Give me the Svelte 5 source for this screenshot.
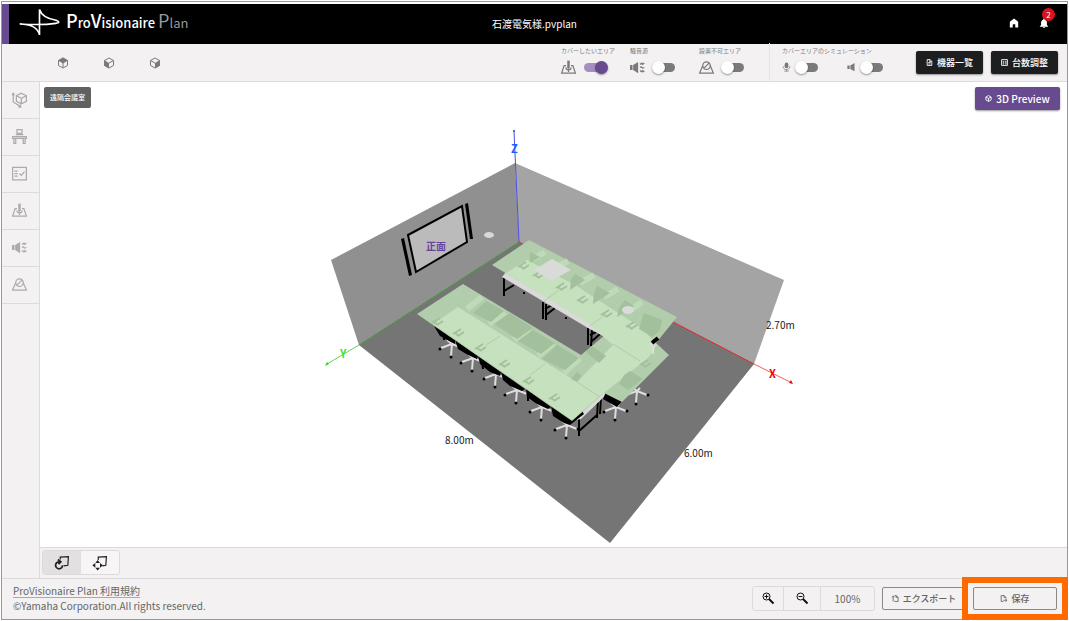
<script lang="ts">
	type Toggle = { id: string; icon: string; label: string; on: boolean };

	let areaToggles = $state<Toggle[]>([
		{ id: 'cover', icon: 'cover', label: 'カバーしたいエリア', on: true },
		{ id: 'noise', icon: 'noise', label: '騒音源', on: false },
		{ id: 'blocked', icon: 'blocked', label: '設置不可エリア', on: false }
	]);

	let simToggles = $state([
		{ id: 'mic', icon: 'mic', on: false },
		{ id: 'speaker', icon: 'speaker', on: false }
	]);

	const views = ['cubeTop', 'cubeLeft', 'cubeRight'];
	const tools = ['dimensions', 'desk', 'checklist', 'cover', 'noise', 'blocked'];

	let dragMode = $state('rotate');

	const nearChairs = [
		[452, 344],
		[473, 358],
		[496, 374],
		[517, 390],
		[542, 407],
		[567, 425],
		[616, 407],
		[637, 391]
	];

	const seats = [
		'434,326 455,340 455,344 449,341 440,336',
		'455,340 478,356 477,359 468,355 458,349',
		'478,356 501,372 500,376 490,372 480,364',
		'501,372 525,389 522,391 510,386 503,380',
		'526,389 551,407 548,409 537,404 527,397',
		'551,406 571,420 582,411 584,414 570,425 564,423 553,416',
		'606,392 623,400 617,407 603,399'
	];

	const shades = [
		'473,313 486,301 504,311 491,322',
		'494,324 510,313 533,328 517,339',
		'518,341 533,330 555,343 541,354',
		'542,359 557,345 579,358 565,370',
		'571,379 577,372 582,376 577,382',
		'586,352 592,346 606,356 599,363',
		'530,252 540,257 530,263',
		'575,274 585,280 570,290 571,279',
		'597,286 610,293 593,304 594,293',
		'625,300 634,306 617,317 619,308',
		'644,313 662,320 660,330 652,337 639,329',
		'624,375 630,371 643,379 628,390 619,384'
	];

	const arms = [
		[437, 322],
		[458, 333],
		[480, 348],
		[504, 364],
		[528, 381],
		[554, 398],
		[523, 266],
		[538, 275],
		[561, 287],
		[582, 300],
		[606, 314],
		[631, 326],
		[645, 364],
		[626, 382]
	];
</script>

{#snippet icon(name: string)}
	<svg class="icon icon--{name}" viewBox="0 0 24 24" aria-hidden="true">
		{#if name === 'cubeTop'}
			<path class="line" d="M12 2 21 7v10l-9 5-9-5V7zM12 12v10" />
			<path class="solid" d="M12 1 22 7l-10 6L2 7z" />
		{:else if name === 'cubeLeft'}
			<path class="line" d="M12 2 21 7v10l-9 5-9-5V7zM12 12l9-5" />
			<path class="solid" d="M2 6l10 6v11L2 17z" />
		{:else if name === 'cubeRight'}
			<path class="line" d="M12 2 21 7v10l-9 5-9-5V7zM3 7l9 5" />
			<path class="solid" d="M22 6l-10 6v11l10-6z" />
		{:else if name === 'cube'}
			<path class="line" d="M12 2 21 7v10l-9 5-9-5V7zM3 7l9 5 9-5M12 12v10" />
		{:else if name === 'dimensions'}
			<path class="line" d="M15 2l8 4v9l-8 4-8-4V6zM7 6l8 4 8-4M15 10v9M2 3v13l11 7M0 5l2-3 2 3M10 24h4l-1-4" />
		{:else if name === 'desk'}
			<path class="line" d="M8 1h8v6H8zM6 9h12M1 12h22v3H1zM3 15v8h3v-8M18 15v8h3v-8" />
		{:else if name === 'checklist'}
			<path class="line" d="M1 2h22v20H1zM4 8h5M4 12h5M4 16h5M12 12l3 3 5-6" />
		{:else if name === 'cover'}
			<path class="line" d="M8 9H5L1 21h22L19 9h-3M12 13v6M8 12c0 5 8 5 8 0" />
			<path class="solid" d="M10 1h4v12h-4z" />
		{:else if name === 'noise'}
			<path class="solid" d="M0 8h4v8H0zM5 8l8-5v18l-8-5z" />
			<path class="line" d="M16 7l3-2 1 2 3-2M16 12l2-1 2 2 3-1M16 17l3 2 1-2 3 2" />
		{:else if name === 'blocked'}
			<path class="line" d="M6 9 1 21h22L18 9M18 9a6 6 0 1 1-12 0 6 6 0 0 1 12 0M8 13l8-8" />
		{:else if name === 'mic'}
			<rect class="solid" x="7" y="0" width="10" height="15" rx="5" />
			<path class="line" d="M3 10c0 12 18 12 18 0M12 18v5M6 23h12" />
		{:else if name === 'speaker'}
			<path class="solid" d="M1 8h6v9H1zM9 8l11-7v22L9 17z" />
		{:else if name === 'home'}
			<path class="solid" d="M2 9l10-8 10 8v14h-7v-8H9v8H2z" />
		{:else if name === 'bell'}
			<path class="solid" d="M12 1c-2 0-2 2-2 3-4 1-5 4-5 7v6l-3 3v1h20v-1l-3-3v-6c0-3-1-6-5-7 0-1 0-3-2-3zM9 22h6c0 3-6 3-6 0z" />
		{:else if name === 'doc'}
			<path class="line" d="M4 2h10l6 6v14H4zM8 12h8M8 17h8M13 2v7h6" />
		{:else if name === 'calc'}
			<path class="line" d="M2 2h20v20H2zM6 8h5M6 13h5M6 17h5M14 8h5M14 13h5M14 17h5" />
		{:else if name === 'export'}
			<path class="line" d="M8 22h13V8l-6-6H9M14 2v6h6M4 22V5M0 8l4-5 4 5" />
		{:else if name === 'save'}
			<path class="line" d="M12 22H4V2h10l6 6v4M14 2v6h5M12 18h11M19 13l4 5-4 5" />
		{:else if name === 'rotate'}
			<path class="line" d="M9 6 9 2l14-1-1 15-7 1" />
			<path class="arrow" d="M13 16a6 6 0 1 1-5-6M5 6l5 4-4 4" />
		{:else if name === 'pan'}
			<path class="line" d="M9 7V2l14-1-1 15-6 1" />
			<path class="solid" d="M8 7l4 5H4zM8 25l4-5H4zM-1 16l5-4v8zM17 16l-5-4v8z" />
		{:else if name === 'zoomIn' || name === 'zoomOut'}
			<circle class="line" cx="9" cy="9" r="7" />
			<path class="heavy" d="M14 14l9 9" />
			<path class="line" d={name === 'zoomIn' ? 'M5 9h8M9 5v8' : 'M5 9h8'} />
		{/if}
	</svg>
{/snippet}

<div class="app">
	<header class="header">
		<div class="brand">
			<svg class="brand__mark" viewBox="56 22 124 84" aria-hidden="true">
				<path d="M58 70C90 70 112 80 118 103V26C124 45 145 54 165 58C179 62 180 67 167 68C140 72 90 72 58 70" />
			</svg>
			<span class="brand__name"><b>P</b>ro<b>V</b>isionaire <span class="brand__sub"><b>P</b>lan</span></span>
		</div>
		<h1 class="header__file">石渡電気様.pvplan</h1>
		<div class="header__actions">
			<button type="button" class="header__btn" aria-label="Home">{@render icon('home')}</button>
			<button type="button" class="header__btn" aria-label="Notifications">
				{@render icon('bell')}
				<span class="badge">2</span>
			</button>
		</div>
	</header>

	<div class="toolbar">
		<div class="views">
			{#each views as view (view)}
				<button type="button" class="views__btn" aria-label={view}>{@render icon(view)}</button>
			{/each}
		</div>

		<div class="toggles">
			{#each areaToggles as t (t.id)}
				<div class="toggle">
					<label class="toggle__label" for={t.id}>{t.label}</label>
					<div class="toggle__row">
						{@render icon(t.icon)}
						<input class="switch" type="checkbox" id={t.id} bind:checked={t.on} />
					</div>
				</div>
			{/each}
		</div>

		<div class="sim" role="group" aria-labelledby="sim-title">
			<span class="toggle__label" id="sim-title">カバーエリアのシミュレーション</span>
			<div class="sim__row">
				{#each simToggles as t (t.id)}
					<label class="sim__item" aria-label={t.id}>
						{@render icon(t.icon)}
						<input class="switch" type="checkbox" bind:checked={t.on} />
					</label>
				{/each}
			</div>
		</div>

		<div class="toolbar__actions">
			<button type="button" class="btn btn--dark">{@render icon('doc')}機器一覧</button>
			<button type="button" class="btn btn--dark">{@render icon('calc')}台数調整</button>
		</div>
	</div>

	<div class="workspace">
		<nav class="sidebar">
			{#each tools as tool (tool)}
				<button type="button" class="sidebar__btn" aria-label={tool}>{@render icon(tool)}</button>
			{/each}
		</nav>

		<main class="main">
			<div class="stage">
				<svg class="scene" viewBox="40 82 1027 465" role="img" aria-label="3D room">
					<polygon fill="#757575" points="519,242 754,364 610,543 359,345" />
					<polygon fill="#909090" points="515,163 519,242 359,345 331,260" />
					<polygon fill="#a4a4a4" points="515,163 784,280 754,364 519,242" />

					<!-- display with side speakers -->
					<polygon class="screen" points="408,235 462,206 467,242 416,272" />
					<polygon points="401,239 404,238 412,275 409,276" />
					<polygon points="465,204 468,203 473,239 470,239" />
					<ellipse fill="#d9d9d9" cx="489" cy="235" rx="5" ry="3" />
					<text class="scene__front" x="426" y="250">正面</text>

					<path stroke="#3f9b34" d="M519 242 359 345" />
					<path stroke="#e02222" d="M519 242 754 364" />

					<!-- table frames -->
					<path class="frame" d="M504 278v18M504 291l10-6M543 302v17M546 304v16M546 315l9-7M545 309l7-4M588 328v17M592 330l-1 16M591 342l9-8M590 335l8-4M523 293h2M565 318h2" />
					<polygon fill="#dcd9db" points="502,277 506,272 607,331 603,336 588,328" />
					<path class="frame" d="M579 419v17M579 431l18-16M598 398l-1 20M601 396l-1 18" />
					<polygon fill="#dcd9db" points="572,421 600,396 606,390 609,392 581,419" />
					<path class="frame" d="M444 333v7M482 361l1 8M528 393v8" />

					{#each nearChairs as [x, y] (x)}
						<g transform="translate({x} {y})">
							<path class="legs" d="M0 0-11 4M0 0-1 12M0 0 10 4M0 0-5-4M0 0 3-3" />
							<circle cx="-12" cy="5" r="1.5" />
							<circle cx="-1" cy="13" r="1.5" />
							<circle cx="11" cy="4" r="1.5" />
						</g>
					{/each}
					{#each seats as points (points)}
						<polygon {points} />
					{/each}

					<!-- coverage areas -->
					<polygon fill="#b1cdab" points="417,314 463,284 581,355 605,335 588,322 492,265 529,240 677,317 656,343 669,355 622,402 604,393 572,421" />
					<path class="stripe" d="M467 309 482 297M489 324 505 312M514 340 530 328M538 356 554 343M564 373 580 358M533 259 545 252M554 268 568 261M580 283 594 275M604 297 618 289M628 312 642 302M610 361 632 341" />
					<polygon fill="#c5e1be" points="433,324 458,307 577,382 613,345 589,324 506,273 527,260 575,285 643,329 657,345 648,358 600,396 572,420" />
					{#each shades as points (points)}
						<polygon fill="#a3c09d" {points} />
					{/each}
					{#each arms as [x, y] (x)}
						<path class="arm" d="M{x - 5} {y + 1}l8-5M{x} {y + 3}l6-4M{x - 3} {y}l4 3" />
					{/each}
					<path class="seam" d="M486 345l14-9M530 375l15-11M577 382l23 15M543 302l16-12M590 326l15-11M613 344l27 17" />
					<path class="legs" d="M653 346v8M650 345l5-3" />
					<path stroke="#000" stroke-width="4" d="M652 343l6-5" />
					<polygon fill="#d9dbd9" points="552,259 571,270 551,281 534,270" />
					<ellipse fill="#d9dbd9" cx="628" cy="310" rx="6" ry="4" />

					<!-- axes -->
					<path stroke="#4a50e6" d="M519 242 514 131" />
					<circle fill="#1a3fff" cx="514" cy="131" r="1" />
					<path stroke="#5fd44b" d="M359 345 327 364" />
					<polygon fill="#28d414" points="325,366 329,364 327,362" />
					<path stroke="#ff5a5a" d="M754 364 790 382" />
					<polygon fill="#f00000" points="793,384 789,383 791,380" />
					<text class="axis" fill="#1c5cff" x="511" y="153">Z</text>
					<text class="axis" fill="#4be01e" x="340" y="358">Y</text>
					<text class="axis" fill="#f00000" x="769" y="378">X</text>

					<text class="dim" x="766" y="329">2.70m</text>
					<text class="dim" x="445" y="444">8.00m</text>
					<text class="dim" x="684" y="457">6.00m</text>
				</svg>
				<span class="room">遠隔会議室</span>
				<button type="button" class="btn btn--preview">{@render icon('cube')}3D Preview</button>
			</div>

			<div class="modes">
				<div class="segment">
					<button
						type="button"
						class="segment__btn"
						class:segment__btn--active={dragMode === 'rotate'}
						aria-label="Rotate"
						onclick={() => (dragMode = 'rotate')}>{@render icon('rotate')}</button
					>
					<button
						type="button"
						class="segment__btn"
						class:segment__btn--active={dragMode === 'pan'}
						aria-label="Pan"
						onclick={() => (dragMode = 'pan')}>{@render icon('pan')}</button
					>
				</div>
			</div>
		</main>
	</div>

	<footer class="footer">
		<div class="legal">
			<a class="legal__link" href="#terms">ProVisionaire Plan 利用規約</a>
			<span>©Yamaha Corporation.All rights reserved.</span>
		</div>
		<div class="zoom">
			<button type="button" class="zoom__btn" aria-label="Zoom in">{@render icon('zoomIn')}</button>
			<button type="button" class="zoom__btn zoom__btn--out" aria-label="Zoom out">{@render icon('zoomOut')}</button>
			<span class="zoom__value">100%</span>
		</div>
		<button type="button" class="btn btn--outline">{@render icon('export')}エクスポート</button>
		<div class="save">
			<button type="button" class="btn btn--outline">{@render icon('save')}保存</button>
		</div>
	</footer>
</div>

<style>
	:global(body) {
		background: #fff;
	}

	:global(#app) {
		padding: 1px;
	}

	.app {
		--panel: #f3f1f2;
		--rule: #dcdadb;
		--purple: #684a8f;
		display: flex;
		flex-direction: column;
		box-sizing: border-box;
		min-height: calc(100vh - 2px);
		padding-top: 2px;
		border: 1px solid #999;
		background: #fff;
		color: #666;
		font-family: 'Noto Sans CJK JP', 'Noto Sans', sans-serif;
		font-size: 10px;
		line-height: 15px;
	}

	button {
		margin: 0;
		padding: 0;
		border: 0;
		background: none;
		color: inherit;
		font: inherit;
		cursor: pointer;
	}

	.icon {
		display: block;
		flex-shrink: 0;
		width: 15px;
		height: 15px;
		overflow: visible;
	}

	.line {
		fill: none;
		stroke: currentColor;
		stroke-width: 2;
	}

	.arrow {
		fill: none;
		stroke: currentColor;
		stroke-width: 3;
	}

	.heavy {
		stroke: currentColor;
		stroke-width: 4;
	}

	.solid {
		fill: currentColor;
	}

	.header {
		display: grid;
		grid-template-columns: 1fr auto 1fr;
		align-items: center;
		box-sizing: border-box;
		height: 40px;
		padding: 0 17px 2px 10px;
		border-left: 7px solid var(--purple);
		background: #000;
		color: #fff;
	}

	.brand {
		display: flex;
		align-items: center;
		gap: 6px;
		padding-bottom: 3px;
	}

	.brand__mark {
		width: 41px;
		height: 28px;
		fill: none;
		stroke: #fff;
		stroke-width: 5;
	}

	.brand__name {
		font-size: 13px;
		font-weight: 500;
		line-height: 24px;
		white-space: nowrap;
	}

	.brand__name b {
		font-size: 18px;
		font-weight: inherit;
	}

	.brand__sub {
		color: #999;
		font-weight: 400;
	}

	.header__file {
		margin: 0;
		font-size: 10px;
		font-weight: 400;
	}

	.header__actions {
		display: flex;
		justify-content: flex-end;
		gap: 18px;
	}

	.header__btn {
		position: relative;
	}

	.header__btn .icon {
		width: 12px;
		height: 10px;
	}

	.badge {
		position: absolute;
		top: -10px;
		right: -5px;
		width: 13px;
		height: 13px;
		border-radius: 50%;
		background: #d9141e;
		font-size: 8px;
		line-height: 13px;
		text-align: center;
	}

	.toolbar {
		display: flex;
		align-items: center;
		box-sizing: border-box;
		height: 38px;
		padding: 0 9px 0 55px;
		border-bottom: 1px solid var(--rule);
		background: var(--panel);
		color: #7a7a7a;
	}

	.views {
		display: flex;
		gap: 34px;
		margin-right: auto;
	}

	.views .icon {
		width: 12px;
		height: 12px;
	}

	.toggles {
		display: flex;
		gap: 23px;
		padding: 0 24px 4px 0;
	}

	.toggle {
		width: 46px;
	}

	.toggle__label {
		display: block;
		height: 13px;
		font-size: 6px;
		line-height: 10px;
		white-space: nowrap;
	}

	.toggle__row {
		display: flex;
		align-items: center;
		justify-content: space-between;
		height: 16px;
	}

	.switch {
		position: relative;
		flex-shrink: 0;
		width: 22px;
		height: 9px;
		margin: 0 1px;
		border-radius: 5px;
		background: #7a7a7a;
		appearance: none;
	}

	.switch::before {
		content: '';
		position: absolute;
		top: -2px;
		left: -1px;
		width: 13px;
		height: 13px;
		border-radius: 50%;
		background: #fff;
		box-shadow: 0 1px 2px rgb(0 0 0 / 40%);
	}

	.switch:checked {
		background: #a48fc0;
	}

	.switch:checked::before {
		left: 11px;
		background: var(--purple);
	}

	.sim {
		padding: 3px 0 7px 12px;
		border-left: 1px solid #e6e4e5;
	}

	.sim__row {
		display: flex;
		align-items: center;
		gap: 28px;
		height: 16px;
	}

	.sim__item {
		display: flex;
		align-items: center;
		gap: 4px;
	}

	.sim .icon {
		width: 9px;
		height: 12px;
	}

	.toolbar__actions {
		display: flex;
		gap: 8px;
		margin-left: 32px;
	}

	.btn {
		display: flex;
		align-items: center;
		justify-content: center;
		gap: 4px;
		box-sizing: border-box;
		height: 23px;
		border-radius: 2px;
		font-size: 9px;
		font-weight: 500;
		white-space: nowrap;
	}

	.btn .icon {
		width: 7px;
		height: 7px;
	}

	.btn .line {
		stroke-width: 3;
	}

	.btn--dark {
		width: 67px;
		background: #1c1e1f;
		color: #fff;
		box-shadow: 0 1px 2px rgb(0 0 0 / 40%);
	}

	.btn--preview {
		position: absolute;
		top: 5px;
		right: 7px;
		width: 85px;
		background: var(--purple);
		color: #fff;
		font-size: 10px;
		box-shadow: 0 1px 2px rgb(0 0 0 / 40%);
	}

	.btn--outline {
		width: 84px;
		border: 1px solid #8a8a8a;
	}

	.workspace {
		display: flex;
		flex: 1;
	}

	.sidebar {
		display: flex;
		flex-direction: column;
		flex-shrink: 0;
		box-sizing: border-box;
		width: 38px;
		border-right: 1px solid var(--rule);
		background: var(--panel);
		color: #acacac;
	}

	.sidebar__btn {
		display: grid;
		place-items: center;
		box-sizing: border-box;
		height: 37px;
		padding: 0 2px 1px 0;
		border-bottom: 1px solid var(--rule);
	}

	.main {
		display: flex;
		flex: 1;
		flex-direction: column;
		min-width: 0;
	}

	.stage {
		position: relative;
		flex: 1;
		background: #fff;
	}

	.scene {
		display: block;
		width: 100%;
		height: auto;
	}

	.screen {
		fill: #bbb;
		stroke: #000;
		stroke-width: 2;
	}

	.scene__front {
		fill: #65459b;
		font-size: 10px;
		font-weight: 700;
	}

	.frame {
		fill: none;
		stroke: #000;
		stroke-width: 2;
	}

	.legs {
		fill: none;
		stroke: #dedede;
		stroke-width: 2;
	}

	.stripe {
		stroke: #bfdab8;
		stroke-width: 6;
	}

	.arm {
		fill: none;
		stroke: #a3c09d;
		stroke-width: 2;
	}

	.seam {
		fill: none;
		stroke: #b0ccaa;
	}

	.axis {
		font-size: 11px;
		font-weight: 700;
	}

	.dim {
		fill: #1a1a1a;
		font-size: 10px;
	}

	.room {
		position: absolute;
		top: 5px;
		left: 4px;
		box-sizing: border-box;
		width: 47px;
		height: 21px;
		border-radius: 2px;
		background: #616161;
		color: #fff;
		font-size: 7px;
		font-weight: 500;
		line-height: 21px;
		text-align: center;
	}

	.modes {
		box-sizing: border-box;
		height: 31px;
		padding: 2px;
		border-top: 1px solid var(--rule);
		background: var(--panel);
	}

	.segment {
		display: inline-flex;
		overflow: hidden;
		border: 1px solid var(--rule);
		border-radius: 3px;
		color: #222;
	}

	.segment .icon {
		width: 14px;
		height: 14px;
	}

	.segment__btn {
		display: grid;
		place-items: center;
		width: 38px;
		height: 23px;
		background: #f7f5f6;
	}

	.segment__btn--active {
		background: #e2e0e1;
	}

	.footer {
		display: flex;
		align-items: center;
		box-sizing: border-box;
		height: 41px;
		padding: 0 10px 2px 11px;
		border-top: 1px solid var(--rule);
		background: var(--panel);
	}

	.legal {
		display: flex;
		flex-direction: column;
		align-items: flex-start;
		margin-right: auto;
	}

	.legal__link {
		color: inherit;
		text-underline-offset: 2px;
		text-decoration-color: #aaa;
	}

	.zoom {
		display: flex;
		align-items: stretch;
		box-sizing: border-box;
		height: 25px;
		margin-right: 7px;
		border: 1px solid var(--rule);
		border-radius: 3px;
	}

	.zoom__btn {
		display: grid;
		place-items: center;
		box-sizing: border-box;
		width: 31px;
		border-right: 1px solid var(--rule);
		color: #111;
	}

	.zoom__btn--out {
		width: 37px;
	}

	.zoom__btn .icon {
		width: 12px;
		height: 12px;
	}

	.zoom__value {
		width: 53px;
		line-height: 23px;
		text-align: center;
	}

	.save {
		position: relative;
		margin-left: 7px;
	}

	/* highlight ring around the save action */
	.save::after {
		content: '';
		position: absolute;
		inset: -10px -11px;
		border: 6px solid #ff6a00;
		pointer-events: none;
	}
</style>
